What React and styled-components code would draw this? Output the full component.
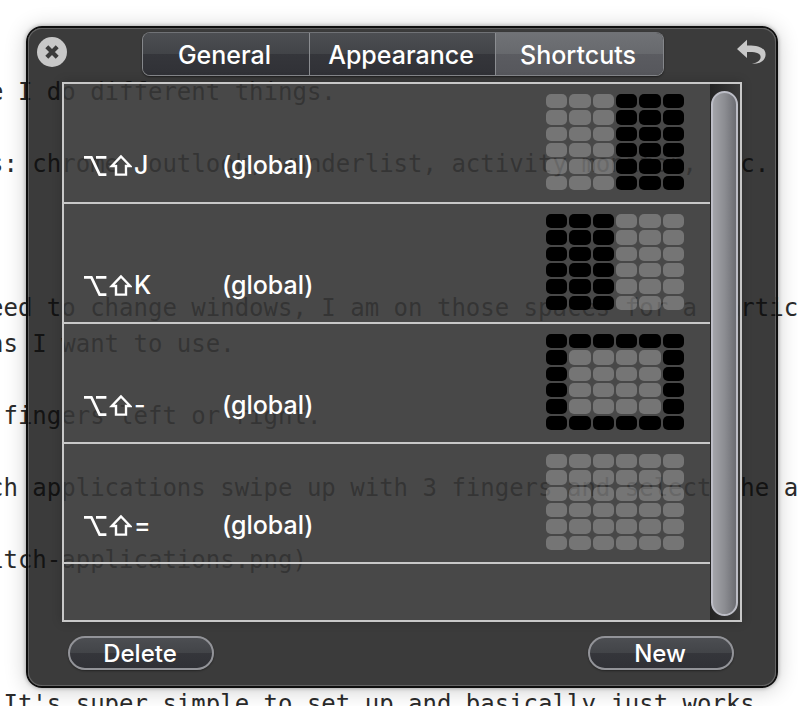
import React, { useState } from "react";
import styled, { createGlobalStyle, css } from "styled-components";

const GlobalStyle = createGlobalStyle`
  *, *::before, *::after { box-sizing: border-box; }
  html, body { margin: 0; background: #fff; }
  button { font: inherit; color: inherit; padding: 0; border: 0; background: none; cursor: pointer; }
`;

const Page = styled.main`
  display: grid;
  grid-template: minmax(0, 1fr) / minmax(0, 1fr);
  height: 100vh;
  overflow: hidden;
  background: #fff;
`;

const Notes = styled.article`
  grid-area: 1 / 1;
  margin: 74px 0 0 -11px;
  font: 24px/36px "DejaVu Sans Mono", monospace;
  color: #2b2b2b;
  white-space: pre;
`;

const NoteLine = styled.p`
  margin: 0;
  height: 36px;
`;

const Panel = styled.section`
  grid-area: 1 / 1;
  z-index: 1;
  display: flex;
  flex-direction: column;
  margin: 26px 20px 18px 26px;
  padding: 4px 34px 16px;
  border: 2px solid #0e0e0e;
  border-radius: 16px;
  background: rgba(14, 14, 14, 0.81);
  background-clip: padding-box;
  box-shadow: inset 0 0 0 1px rgba(160, 160, 160, 0.4), 0 0 4px rgba(0, 0, 0, 0.35),
    0 2px 22px rgba(0, 0, 0, 0.2);
  font: 500 25px/32px Inter, sans-serif;
  color: #fff;
`;

const Toolbar = styled.header`
  display: grid;
  grid-template-columns: 31px 1fr 30px;
  align-items: center;
  margin: 0 -25px 6px;
`;

const IconButton = styled.button`
  display: grid;
  place-items: center;
  width: 30px;
  height: 30px;
  margin-bottom: 4px;
`;

const Tabs = styled.nav`
  display: grid;
  grid-template-columns: 166px 186px 168px;
  justify-self: center;
  height: 44px;
  border: 1px solid #85878b;
  border-top-color: #707276;
  border-radius: 8px;
  overflow: hidden;
  box-shadow: 0 1px 2px rgba(0, 0, 0, 0.5);
`;

const Tab = styled.button`
  padding: 2px 2px 0 0;
  background: linear-gradient(#4c4e52, #424448 50%, #35363b 50%, #303136);
  & + & { border-left: 1px solid #8b8d91; }
  ${(p) => p.$active && css`
    background: linear-gradient(#707276, #67696d 50%, #5b5c61 50%, #56575c);
  `}
`;

const ListBox = styled.div`
  flex: 1;
  min-height: 0;
  display: flex;
  border: 2px solid #c8c8c8;
  background: rgba(86, 86, 86, 0.5);
  background-clip: padding-box;
  box-shadow: 0 0 10px rgba(0, 0, 0, 0.2);
`;

const ListBody = styled.div`
  flex: 1;
  min-width: 0;
  overflow: hidden;
`;

const ShortcutTable = styled.table`
  width: 100%;
  table-layout: fixed;
  border-collapse: separate;
  border-spacing: 0;
`;

const ShortcutRow = styled.tr`
  height: 120px;
`;

const Cell = styled.td`
  width: ${(p) => p.$width || "auto"};
  padding: ${(p) => p.$padding || "0 0 21px"};
  vertical-align: bottom;
  border-bottom: 2px solid #c8c8c8;
`;

const Keys = styled.kbd`
  display: flex;
  align-items: center;
  gap: 2px;
  font: inherit;
`;

const Preview = styled.div`
  display: grid;
  grid-template: repeat(6, 1fr) / repeat(6, 1fr);
  gap: 2px;
  width: 138px;
  height: 96px;
`;

const PreviewCell = styled.span`
  border-radius: 5px;
  background: ${(p) => (p.$filled ? "#000" : "rgba(222, 222, 222, 0.3)")};
`;

const ScrollTrack = styled.div`
  width: 30px;
  padding: 7px 2px 4px 1px;
  background: linear-gradient(90deg, rgba(20, 20, 20, 0.7), rgba(48, 48, 48, 0.6));
`;

const ScrollThumb = styled.div`
  height: 100%;
  border: 2px solid #bcbdc6;
  border-radius: 14px;
  background: linear-gradient(90deg, #a3a4a9, #8c8d92 50%, #6c6d73);
`;

const Footer = styled.footer`
  display: flex;
  justify-content: space-between;
  padding: 14px 8px 0 6px;
`;

const PillButton = styled.button`
  width: 146px;
  height: 34px;
  padding: 2px 2px 0 0;
  border: 2px solid #929398;
  border-radius: 17px;
  font-size: 24px;
  line-height: 28px;
  background: linear-gradient(#4c4e52, #424448 50%, #35363b 50%, #303136);
  box-shadow: 0 1px 2px rgba(0, 0, 0, 0.4);
`;

const NOTES = [
  "e I do different things.",
  "",
  "s: chrome, outlook, wunderlist, activity monitor, etc.",
  "",
  "",
  "",
  "eed to change windows, I am on those spaces for a particular",
  "ns I want to use.",
  "",
  " fingers left or right.",
  "",
  "ch applications swipe up with 3 fingers and select the app",
  "",
  "itch-applications.png)",
  "",
  "",
  "",
  " It's super simple to set up and basically just works",
];

const SHORTCUTS = [
  { key: "J", label: "Right half", filled: (r, c) => c > 2 },
  { key: "K", label: "Left half", filled: (r, c) => c < 3 },
  { key: "-", label: "Outer edge", filled: (r, c) => r === 0 || r === 5 || c === 0 || c === 5 },
  { key: "=", label: "No cells", filled: () => false },
];

const CELLS = Array.from({ length: 36 }, (_, i) => [Math.floor(i / 6), i % 6]);

function CloseIcon() {
  return (
    <svg width="30" height="30" viewBox="0 0 30 30" aria-hidden="true">
      <circle cx="15" cy="15" r="15" fill="#c8c8c8" />
      <path d="M9.8 9.8 20.2 20.2M20.2 9.8 9.8 20.2" stroke="#3b3b3b" strokeWidth="4.2" />
    </svg>
  );
}

function UndoIcon() {
  return (
    <svg width="30" height="26" viewBox="0 0 30 26" aria-hidden="true">
      <path
        d="M0 10 10 0.8V6.4C22 6.2 28.6 9 28.6 15.6 28.6 21.4 23 25.2 15 24.8 20.6 23.6 23.6 21.4 23.6 18 23.6 14.2 19 12.6 10 13V19Z"
        fill="#c8c8c8"
      />
    </svg>
  );
}

function OptionIcon() {
  return (
    <svg width="23" height="24" viewBox="0 0 23 24" role="img" aria-label="Option">
      <path d="M0 4.4H7.4L15.6 21.6H22.4M12 4.4H22.4" fill="none" stroke="#fff" strokeWidth="2.7" />
    </svg>
  );
}

function ShiftIcon() {
  return (
    <svg width="23" height="24" viewBox="0 0 23 24" role="img" aria-label="Shift">
      <path
        d="M12 3.4 2.8 13H7V21.6H17V13H21.2Z"
        fill="none"
        stroke="#fff"
        strokeWidth="2.4"
      />
    </svg>
  );
}

export default function App() {
  const [tab, setTab] = useState("Shortcuts");
  return (
    <Page>
      <GlobalStyle />
      <Notes>
        {NOTES.map((line, i) => (
          <NoteLine key={i}>{line}</NoteLine>
        ))}
      </Notes>
      <Panel aria-label="Preferences">
        <Toolbar>
          <IconButton aria-label="Close"><CloseIcon /></IconButton>
          <Tabs>
            {["General", "Appearance", "Shortcuts"].map((name) => (
              <Tab key={name} $active={tab === name} aria-pressed={tab === name} onClick={() => setTab(name)}>
                {name}
              </Tab>
            ))}
          </Tabs>
          <IconButton aria-label="Undo"><UndoIcon /></IconButton>
        </Toolbar>
        <ListBox>
          <ListBody>
            <ShortcutTable aria-label="Shortcuts">
              <tbody>
                {SHORTCUTS.map((s) => (
                  <ShortcutRow key={s.key}>
                    <Cell $width="158px" $padding="0 0 21px 20px">
                      <Keys>
                        <OptionIcon />
                        <ShiftIcon />
                        <span>{s.key}</span>
                      </Keys>
                    </Cell>
                    <Cell>(global)</Cell>
                    <Cell $width="164px" $padding="0 0 12px">
                      <Preview role="img" aria-label={s.label}>
                        {CELLS.map(([r, c]) => (
                          <PreviewCell key={`${r}-${c}`} $filled={s.filled(r, c)} />
                        ))}
                      </Preview>
                    </Cell>
                  </ShortcutRow>
                ))}
              </tbody>
            </ShortcutTable>
          </ListBody>
          <ScrollTrack>
            <ScrollThumb />
          </ScrollTrack>
        </ListBox>
        <Footer>
          <PillButton>Delete</PillButton>
          <PillButton>New</PillButton>
        </Footer>
      </Panel>
    </Page>
  );
}
